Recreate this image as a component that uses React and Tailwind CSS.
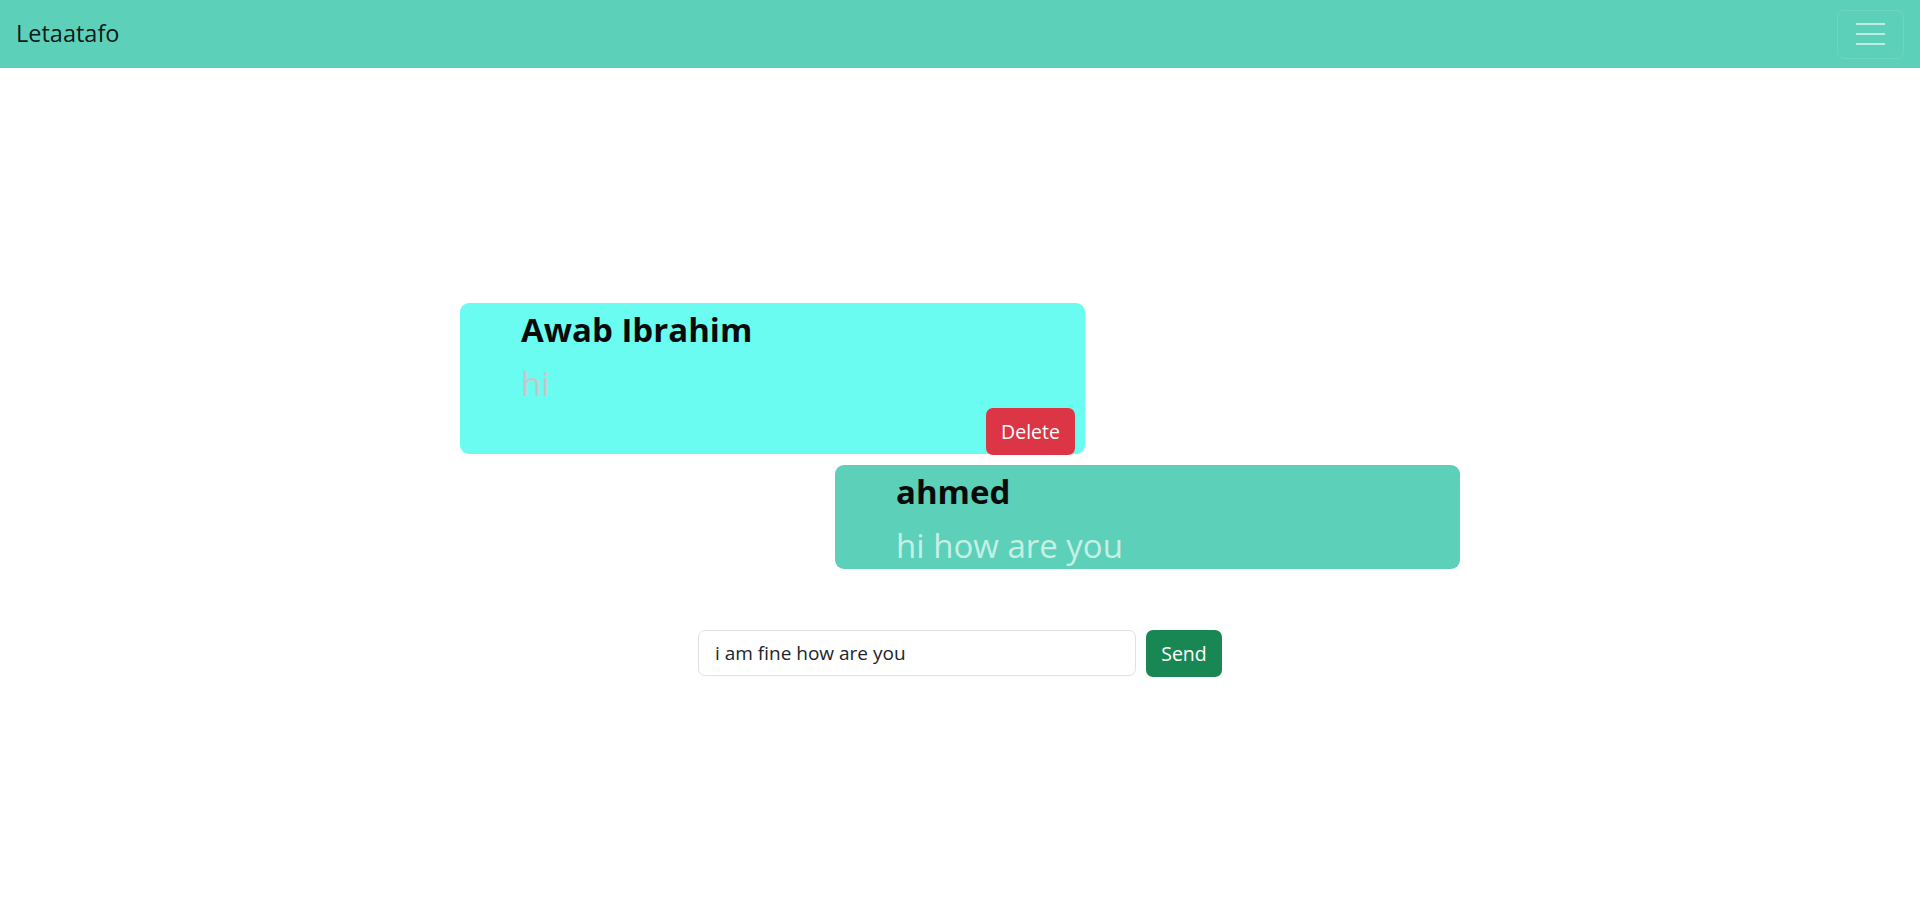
export default function App() {
  const font = { fontFamily: '"Open Sans", "Noto Sans", sans-serif' };

  return (
    <div className="min-h-[917px] bg-white" style={font}>
      <nav className="h-[68px] bg-[#5dd0b9] flex items-center justify-between pl-[16px] pr-[16px]">
        <span className="text-[23.5px] leading-none text-black/90">Letaatafo</span>
        <button className="w-[67px] h-[49px] rounded-[7px] border border-white/10 flex flex-col items-center justify-center gap-[7.5px]">
          <span className="block w-[29px] h-[2.5px] bg-white/60" />
          <span className="block w-[29px] h-[2.5px] bg-white/60" />
          <span className="block w-[29px] h-[2.5px] bg-white/60" />
        </button>
      </nav>

      <main className="w-[1000px] mx-auto pt-[235px] flex flex-col gap-[11px]">
        <div className="w-[625px] h-[151px] rounded-[9px] bg-[#6afcf0] pl-[61px] pr-[10px] pt-[5px] flex flex-col">
          <h2 className="text-[33px] font-bold leading-[44px] text-[#0a0a0a]">Awab Ibrahim</h2>
          <p className="mt-[9px] text-[33px] leading-[45px] text-[#c3c9c9]">hi</p>
          <div className="flex justify-end mt-[2px]">
            <button className="w-[89px] h-[47px] rounded-[7px] bg-[#dc3545] text-white text-[19.5px]">
              Delete
            </button>
          </div>
        </div>

        <div className="w-[625px] h-[104px] ml-auto rounded-[9px] bg-[#5dd0b9] pl-[61px] pt-[5px]">
          <h2 className="text-[33px] font-bold leading-[44px] text-[#0a0a0a]">ahmed</h2>
          <p className="mt-[9px] text-[33px] leading-[45px] text-[#c6efe6]">hi how are you</p>
        </div>
      </main>

      <div className="flex justify-center gap-[10px] mt-[61px]">
        <input
          className="w-[438px] h-[46px] rounded-[7px] border border-[#dee2e6] px-[16px] text-[19px] text-[#212529] outline-none"
          defaultValue="i am fine how are you"
        />
        <button className="w-[76px] h-[47px] rounded-[7px] bg-[#198754] text-white text-[19.5px]">Send</button>
      </div>
    </div>
  );
}
